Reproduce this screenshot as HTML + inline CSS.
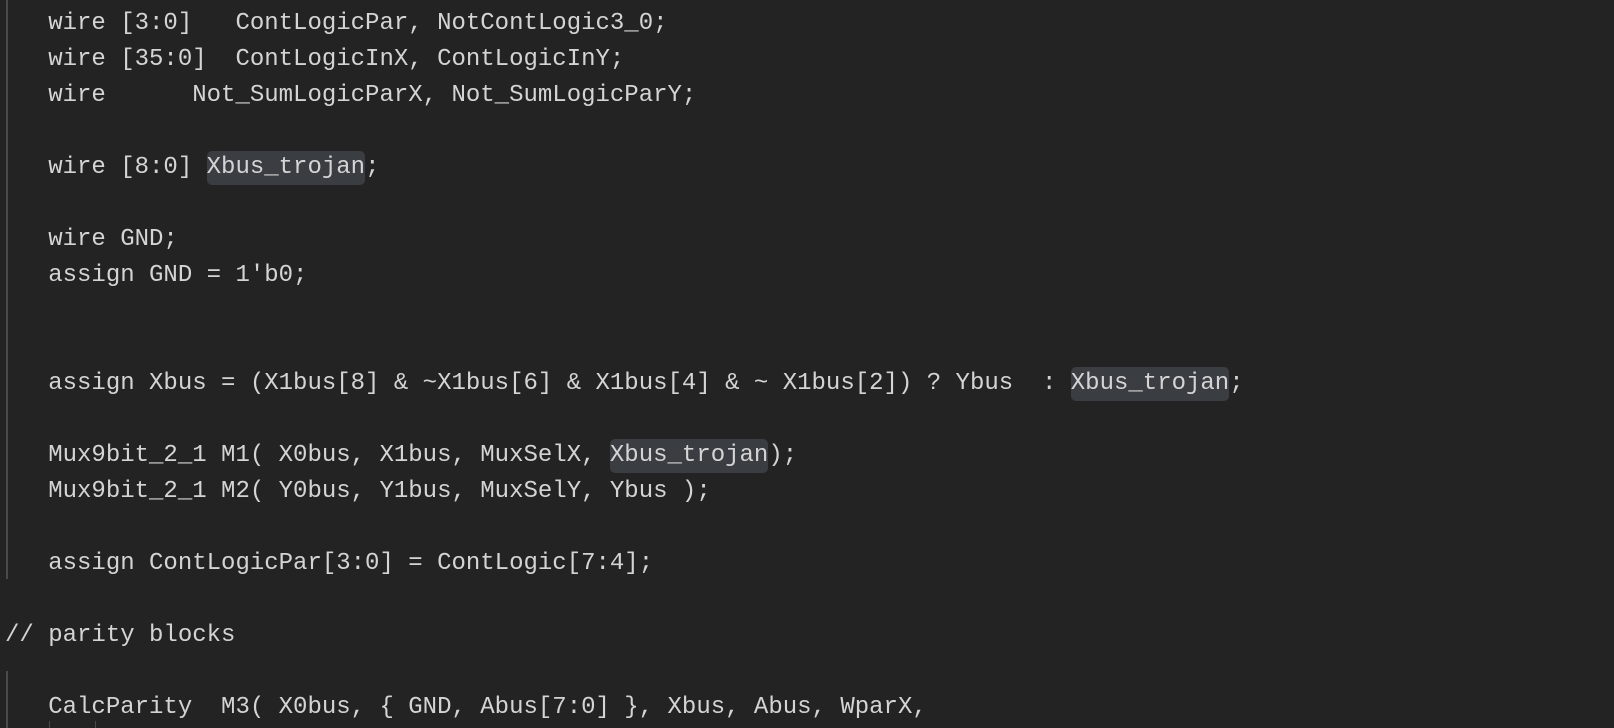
<!DOCTYPE html>
<html><head><style>
html,body{margin:0;padding:0;background:#232323;width:1614px;height:728px;overflow:hidden}
pre{margin:0;position:absolute;left:5px;top:6px;font-family:"Liberation Mono",monospace;font-size:24px;line-height:36px;color:#d4d4d4}
.h{background:#3a3d41;border-radius:5px;padding:3px 0 4px}
.g{position:absolute;width:2px;background:#4a4a4a}
</style></head><body>
<div class="g" style="left:6px;top:0;height:579px"></div>
<div class="g" style="left:6px;top:671px;height:57px"></div>
<div class="g" style="left:49px;top:721px;height:7px;width:1px"></div>
<div class="g" style="left:95px;top:721px;height:7px;width:1px"></div>
<pre>   wire [3:0]   ContLogicPar, NotContLogic3_0;
   wire [35:0]  ContLogicInX, ContLogicInY;
   wire      Not_SumLogicParX, Not_SumLogicParY;

   wire [8:0] <span class="h">Xbus_trojan</span>;

   wire GND;
   assign GND = 1'b0;


   assign Xbus = (X1bus[8] &amp; ~X1bus[6] &amp; X1bus[4] &amp; ~ X1bus[2]) ? Ybus  : <span class="h">Xbus_trojan</span>;

   Mux9bit_2_1 M1( X0bus, X1bus, MuxSelX, <span class="h">Xbus_trojan</span>);
   Mux9bit_2_1 M2( Y0bus, Y1bus, MuxSelY, Ybus );

   assign ContLogicPar[3:0] = ContLogic[7:4];

// parity blocks

   CalcParity  M3( X0bus, { GND, Abus[7:0] }, Xbus, Abus, WparX,
</pre>
</body></html>
